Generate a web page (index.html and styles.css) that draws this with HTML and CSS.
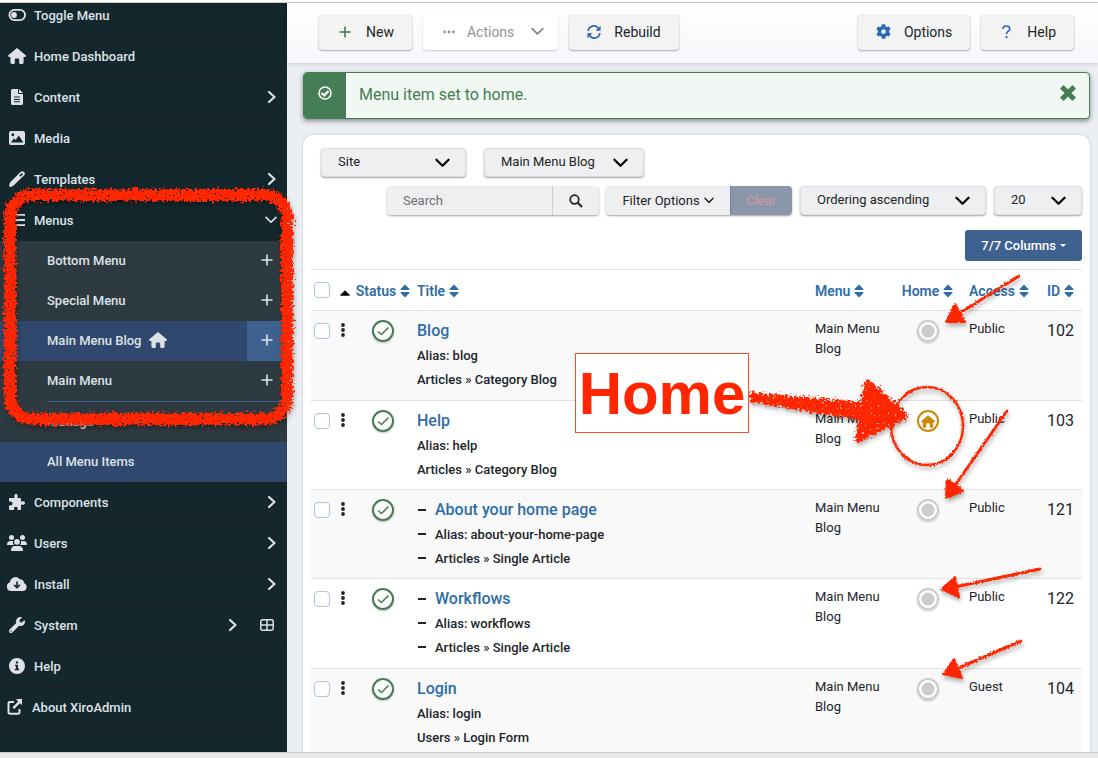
FILE: index.html
```html
<!DOCTYPE html>
<html lang="en">
<head>
<meta charset="utf-8">
<meta name="viewport" content="width=device-width, initial-scale=1">
<title>Menus: Items</title>
<link rel="stylesheet" href="styles.css">
</head>
<body>
<svg class="defs" aria-hidden="true">
  <symbol id="i-home" viewBox="0 0 18 16"><path d="M9 0 18 7.4Q18 9 16.8 9H15.6V14.6Q15.6 16 14.2 16H12.4Q11.2 16 11.2 14.8V11.4Q11.2 10.4 10.2 10.4H7.8Q6.8 10.4 6.8 11.4V14.8Q6.8 16 5.6 16H3.8Q2.4 16 2.4 14.6V9H1.2Q0 9 0 7.6Z"/></symbol>
  <symbol id="i-right" viewBox="0 0 10 14"><path d="M2 2 7.5 7 2 12" fill="none" stroke="currentColor" stroke-width="2.2" stroke-linecap="round" stroke-linejoin="round"/></symbol>
  <symbol id="i-down" viewBox="0 0 16 10"><path d="M1.5 1.5 8 8 14.5 1.5" fill="none" stroke="currentColor" stroke-width="2.3" stroke-linecap="round" stroke-linejoin="round"/></symbol>
  <symbol id="i-plus" viewBox="0 0 12 12"><path d="M6 .5V11.5M.5 6H11.5" fill="none" stroke="currentColor" stroke-width="1.6"/></symbol>
  <symbol id="i-sort" viewBox="0 0 10 14"><path d="M5 .5 9.6 5.2Q9.6 6 9 6H1Q.4 6 .4 5.2ZM5 13.5 9.6 8.8Q9.6 8 9 8H1Q.4 8 .4 8.8Z"/></symbol>
  <symbol id="i-dots" viewBox="0 0 4 14"><circle cx="2" cy="2" r="1.9"/><circle cx="2" cy="7" r="1.9"/><circle cx="2" cy="12" r="1.9"/></symbol>
  <symbol id="i-check" viewBox="0 0 14 14"><path d="M2 7.5 5.5 10.5 12.5 3.5" fill="none" stroke="currentColor" stroke-width="1.6"/></symbol>
</svg>

<div class="app">
  <nav class="sidebar">
    <ul class="nav">
      <li><a href="#"><svg class="ico" viewBox="0 0 18 16"><path fill-rule="evenodd" d="M6.5 2H12A6 6 0 0 1 12 14H6.5A6 6 0 0 1 6.5 2ZM6.5 3.8A4.2 4.2 0 0 0 6.5 12.2H12A4.2 4.2 0 0 0 12 3.8Z"/><circle cx="6" cy="8" r="2.9"/></svg><span>Toggle Menu</span></a></li>
      <li><a href="#"><svg class="ico"><use href="#i-home"/></svg><span>Home Dashboard</span></a></li>
      <li><a href="#"><svg class="ico" viewBox="0 0 18 16"><path fill-rule="evenodd" d="M5 0H10V3.5Q10 5 11.5 5H15V14.5Q15 16 13.5 16H4.5Q3 16 3 14.5V1.5Q3 0 4.5 0ZM6 7.6V8.6H12V7.6ZM6 9.9V10.9H12V9.9ZM6 12.2V13.2H12V12.2ZM11 0 15 4H11Z"/></svg><span>Content</span><svg class="caret"><use href="#i-right"/></svg></a></li>
      <li><a href="#"><svg class="ico" viewBox="0 0 18 16"><path fill-rule="evenodd" d="M3 1H15Q17 1 17 3V13Q17 15 15 15H3Q1 15 1 13V3Q1 1 3 1ZM4.8 3.3A1.5 1.5 0 1 0 4.81 3.3ZM3 12.5H15.3L10.8 5.6 7.6 10 6 8.3Z"/></svg><span>Media</span></a></li>
      <li><a href="#"><svg class="ico" viewBox="0 0 18 16"><path fill-rule="evenodd" d="M12.8.8Q14.4-.6 16 1T16.2 4.2L5 15 2.5 15.9Q1 16 1.2 14.5L2 11.5ZM11.3 4.5 12.5 5.7 15 3.2 13.9 2.1Z"/></svg><span>Templates</span><svg class="caret"><use href="#i-right"/></svg></a></li>
      <li><a href="#" aria-expanded="true"><svg class="ico" viewBox="0 0 18 16"><path d="M2 2H17V3.8H2ZM2 7.1H17V8.9H2ZM2 12.2H17V14H2Z"/></svg><span>Menus</span><svg class="caret-down"><use href="#i-down"/></svg></a>
        <ul class="subnav">
          <li><a href="#">Bottom Menu</a><a class="add" href="#" aria-label="Add to Bottom Menu"><svg><use href="#i-plus"/></svg></a></li>
          <li><a href="#">Special Menu</a><a class="add" href="#" aria-label="Add to Special Menu"><svg><use href="#i-plus"/></svg></a></li>
          <li class="current"><a href="#">Main Menu Blog<svg class="ico"><use href="#i-home"/></svg></a><a class="add" href="#" aria-label="Add to Main Menu Blog"><svg><use href="#i-plus"/></svg></a></li>
          <li><a href="#">Main Menu</a><a class="add" href="#" aria-label="Add to Main Menu"><svg><use href="#i-plus"/></svg></a></li>
          <li class="rule"></li>
          <li><a href="#">Manage</a></li>
          <li class="current"><a href="#">All Menu Items</a></li>
        </ul>
      </li>
      <li><a href="#"><svg class="ico" viewBox="0 0 18 16"><path d="M1 5Q1 4 2 4H6Q6.8 4 6.5 3.2 5.8 0 8 0T9.5 3.2Q9.2 4 10 4H12Q13 4 13 5V7Q13 7.8 13.8 7.5 17 6.6 17 9T13.8 10.5Q13 10.2 13 11V15Q13 16 12 16H10Q9.1 16 9.5 15.2 10.2 12.7 7.8 12.7T6.2 15.2Q6.5 16 5.6 16H2Q1 16 1 15V12Q1 11.2 1.8 11.4 4.6 12 4.6 9.5T1.8 7.5Q1 7.8 1 7Z"/></svg><span>Components</span><svg class="caret"><use href="#i-right"/></svg></a></li>
      <li><a href="#"><svg class="ico wide" viewBox="0 0 20 16"><circle cx="4.5" cy="2.5" r="2.5"/><circle cx="15.5" cy="2.5" r="2.5"/><circle cx="10" cy="6.8" r="2.9"/><path d="M0 10Q0 6 3.5 6H6Q5.3 8.5 7 10ZM20 10Q20 6 16.5 6H14Q14.7 8.5 13 10ZM4 16Q4 11 8 11H12Q16 11 16 16Z"/></svg><span>Users</span><svg class="caret"><use href="#i-right"/></svg></a></li>
      <li><a href="#"><svg class="ico wide" viewBox="0 0 20 16"><path fill-rule="evenodd" d="M4.5 15A4.5 4.5 0 0 1 3 6.2 5.4 5.4 0 0 1 12.7 3.3 3.6 3.6 0 0 1 17 7.1 4.1 4.1 0 0 1 16 15ZM9.2 5.5V9.8L7.6 8.3 6.6 9.4 10 12.8 13.4 9.4 12.4 8.3 10.8 9.8V5.5Z"/></svg><span>Install</span><svg class="caret"><use href="#i-right"/></svg></a></li>
      <li><a href="#"><svg class="ico" viewBox="0 0 512 512"><path d="M507.73 109.1c-2.24-9.03-13.54-12.09-20.12-5.51l-74.36 74.36-67.88-11.31-11.31-67.88 74.36-74.36c6.62-6.62 3.43-17.9-5.66-20.16-47.38-11.74-99.55.91-136.58 37.93-39.64 39.64-50.55 97.1-34.05 147.2L18.74 402.76c-24.99 24.99-24.99 65.51 0 90.5 24.99 24.99 65.51 24.99 90.5 0l213.21-213.21c50.12 16.71 107.47 5.68 147.37-34.22 37.07-37.07 49.7-89.32 37.91-136.73zM64 472c-13.25 0-24-10.75-24-24 0-13.26 10.75-24 24-24s24 10.74 24 24c0 13.25-10.75 24-24 24z"/></svg><span>System</span><svg class="caret spaced"><use href="#i-right"/></svg><svg class="grid-ico" viewBox="0 0 14 12"><path d="M2.5.8H11.5Q13.2.8 13.2 2.5V9.5Q13.2 11.2 11.5 11.2H2.5Q.8 11.2.8 9.5V2.5Q.8.8 2.5.8ZM7 1V11M1 6H13" fill="none" stroke="currentColor" stroke-width="1.5"/></svg></a></li>
      <li><a href="#"><svg class="ico" viewBox="0 0 18 16"><path fill-rule="evenodd" d="M9 0A8 8 0 1 1 8.99 0ZM7.9 3.5V5.6H10V3.5ZM7 6.8V8.2H8V10.8H6.8V12.2H11.2V10.8H10V6.8Z"/></svg><span>Help</span></a></li>
      <li><a href="#" class="compact"><svg class="ico" viewBox="0 0 18 16"><path d="M8 3H4Q2.5 3 2.5 4.5V13Q2.5 14.8 4.3 14.8H12Q13.5 14.8 13.5 13V10" fill="none" stroke="currentColor" stroke-width="2"/><path d="M10 0H16V6L14 4.2 8.2 10 6.5 8.2 12.2 2.5Z"/></svg><span>About XiroAdmin</span></a></li>
    </ul>
  </nav>

  <main class="main">
    <header class="toolbar">
      <button type="button" class="btn new"><svg class="plus green"><use href="#i-plus"/></svg>New</button>
      <button type="button" class="btn disabled" disabled><svg class="more" viewBox="0 0 12 4"><circle cx="1.6" cy="2" r="1.4"/><circle cx="6" cy="2" r="1.4"/><circle cx="10.4" cy="2" r="1.4"/></svg>Actions<svg class="down"><use href="#i-down"/></svg></button>
      <button type="button" class="btn"><svg class="sync" viewBox="0 0 14 14"><path d="M1.2 6A5.5 5.5 0 0 1 11.5 3.8M12.8 8A5.5 5.5 0 0 1 2.5 10.2" fill="none" stroke="currentColor" stroke-width="1.7"/><path d="M13.6.8V5.8H8.6ZM.4 13.2V8.2H5.4Z"/></svg>Rebuild</button>
      <button type="button" class="btn push"><svg class="cog" viewBox="0 0 512 512"><path d="M487.4 315.7l-42.6-24.6c4.3-23.2 4.3-47 0-70.2l42.6-24.6c4.9-2.8 7.1-8.6 5.5-14-11.1-35.6-30-67.8-54.7-94.6-3.8-4.1-10-5.1-14.8-2.3L380.8 110c-17.9-15.4-38.5-27.3-60.8-35.1V25.8c0-5.6-3.9-10.5-9.4-11.7-36.7-8.2-74.3-7.8-109.2 0-5.5 1.2-9.4 6.1-9.4 11.7V75c-22.2 7.9-42.8 19.8-60.8 35.1L88.7 85.5c-4.9-2.8-11-1.9-14.8 2.3-24.7 26.7-43.6 58.9-54.7 94.6-1.7 5.4.6 11.2 5.5 14L67.3 221c-4.3 23.2-4.3 47 0 70.2l-42.6 24.6c-4.9 2.8-7.1 8.6-5.5 14 11.1 35.6 30 67.8 54.7 94.6 3.8 4.1 10 5.1 14.8 2.3l42.6-24.6c17.9 15.4 38.5 27.3 60.8 35.1v49.2c0 5.6 3.9 10.5 9.4 11.7 36.7 8.2 74.3 7.8 109.2 0 5.5-1.2 9.4-6.1 9.4-11.7v-49.2c22.2-7.9 42.8-19.8 60.8-35.1l42.6 24.6c4.9 2.8 11 1.9 14.8-2.3 24.7-26.7 43.6-58.9 54.7-94.6 1.5-5.5-.7-11.3-5.6-14.1zM256 336c-44.1 0-80-35.9-80-80s35.9-80 80-80 80 35.9 80 80-35.9 80-80 80z"/></svg>Options</button>
      <button type="button" class="btn"><svg class="question" viewBox="0 0 10 14"><path d="M1.3 3.8Q1.6 1 4.8 1T8.3 3.7Q8.3 5.2 6.7 6.2T5 9.2" fill="none" stroke="currentColor" stroke-width="1.6"/><circle cx="5" cy="12.2" r="1.1"/></svg>Help</button>
    </header>

    <div class="alert" role="alert">
      <span class="alert-icon"><svg viewBox="0 0 14 14"><circle cx="7" cy="7" r="6" fill="none" stroke="currentColor" stroke-width="1.5"/><path d="M3.6 7 6.2 9.5 10.4 5" fill="none" stroke="currentColor" stroke-width="2.2"/></svg></span>
      <p>Menu item set to home.</p>
      <button type="button" class="close" aria-label="Close"><svg viewBox="0 0 16 16"><path d="M2.5 2.5 13.5 13.5M13.5 2.5 2.5 13.5" stroke="currentColor" stroke-width="4.5"/></svg></button>
    </div>

    <section class="card">
      <div class="filters top">
        <div class="select w-site"><select aria-label="Client"><option>Site</option></select><svg><use href="#i-down"/></svg></div>
        <div class="select w-menu"><select aria-label="Menu"><option>Main Menu Blog</option></select><svg><use href="#i-down"/></svg></div>
      </div>
      <div class="filters tools">
        <div class="search"><input type="text" placeholder="Search" aria-label="Search"><button type="button" aria-label="Search"><svg viewBox="0 0 14 14"><circle cx="5.5" cy="5.5" r="4.3" fill="none" stroke="currentColor" stroke-width="1.7"/><path d="M8.8 8.8 13 13" stroke="currentColor" stroke-width="2"/></svg></button></div>
        <div class="group"><button type="button" class="opts">Filter Options<svg><use href="#i-down"/></svg></button><button type="button" class="clear" disabled>Clear</button></div>
        <div class="select w-order"><select aria-label="Sort by"><option>Ordering ascending</option></select><svg><use href="#i-down"/></svg></div>
        <div class="select w-limit"><select aria-label="Items per page"><option>20</option></select><svg><use href="#i-down"/></svg></div>
      </div>
      <div class="columns"><button type="button">7/7 Columns<span class="tri"></span></button></div>

      <table class="items">
        <colgroup><col class="c-check"><col class="c-order"><col class="c-status"><col><col class="c-menu"><col class="c-home"><col class="c-access"><col class="c-id"></colgroup>
        <thead><tr>
          <th><input type="checkbox" aria-label="Check all"></th>
          <th><a href="#" aria-label="Ordering"><svg class="up" viewBox="0 0 10 6"><path d="M5 .3 9.8 5Q9.8 5.8 9 5.8H1Q.2 5.8.2 5Z"/></svg></a></th>
          <th class="mid"><a href="#">Status <svg class="sort"><use href="#i-sort"/></svg></a></th>
          <th class="title"><a href="#">Title <svg class="sort"><use href="#i-sort"/></svg></a></th>
          <th class="title"><a href="#">Menu <svg class="sort"><use href="#i-sort"/></svg></a></th>
          <th class="mid"><a href="#">Home <svg class="sort"><use href="#i-sort"/></svg></a></th>
          <th class="access"><a href="#">Access <svg class="sort"><use href="#i-sort"/></svg></a></th>
          <th><a href="#">ID <svg class="sort"><use href="#i-sort"/></svg></a></th>
        </tr></thead>
        <tbody>
          <tr>
            <td><input type="checkbox" aria-label="Select Blog"></td><td><svg class="drag"><use href="#i-dots"/></svg></td>
            <td class="mid"><button type="button" class="round" aria-label="Published"><svg><use href="#i-check"/></svg></button></td>
            <td class="title"><div class="item"><a href="#">Blog</a><p>Alias: blog</p><p>Articles » Category Blog</p></div></td>
            <td class="small title">Main Menu Blog</td><td class="mid"><button type="button" class="round off" aria-label="Set home"></button></td><td class="small access">Public</td><td class="id">102</td>
          </tr>
          <tr>
            <td><input type="checkbox" aria-label="Select Help"></td><td><svg class="drag"><use href="#i-dots"/></svg></td>
            <td class="mid"><button type="button" class="round" aria-label="Published"><svg><use href="#i-check"/></svg></button></td>
            <td class="title"><div class="item"><a href="#">Help</a><p>Alias: help</p><p>Articles » Category Blog</p></div></td>
            <td class="small title">Main Menu Blog</td><td class="mid"><button type="button" class="round default" aria-label="Home"><svg><use href="#i-home"/></svg></button></td><td class="small access">Public</td><td class="id">103</td>
          </tr>
          <tr>
            <td><input type="checkbox" aria-label="Select About your home page"></td><td><svg class="drag"><use href="#i-dots"/></svg></td>
            <td class="mid"><button type="button" class="round" aria-label="Published"><svg><use href="#i-check"/></svg></button></td>
            <td class="title"><div class="item child"><a href="#">About your home page</a><p>Alias: about-your-home-page</p><p>Articles » Single Article</p></div></td>
            <td class="small title">Main Menu Blog</td><td class="mid"><button type="button" class="round off" aria-label="Set home"></button></td><td class="small access">Public</td><td class="id">121</td>
          </tr>
          <tr>
            <td><input type="checkbox" aria-label="Select Workflows"></td><td><svg class="drag"><use href="#i-dots"/></svg></td>
            <td class="mid"><button type="button" class="round" aria-label="Published"><svg><use href="#i-check"/></svg></button></td>
            <td class="title"><div class="item child"><a href="#">Workflows</a><p>Alias: workflows</p><p>Articles » Single Article</p></div></td>
            <td class="small title">Main Menu Blog</td><td class="mid"><button type="button" class="round off" aria-label="Set home"></button></td><td class="small access">Public</td><td class="id">122</td>
          </tr>
          <tr>
            <td><input type="checkbox" aria-label="Select Login"></td><td><svg class="drag"><use href="#i-dots"/></svg></td>
            <td class="mid"><button type="button" class="round" aria-label="Published"><svg><use href="#i-check"/></svg></button></td>
            <td class="title"><div class="item"><a href="#">Login</a><p>Alias: login</p><p>Users » Login Form</p></div></td>
            <td class="small title">Main Menu Blog</td><td class="mid"><button type="button" class="round off" aria-label="Set home"></button></td><td class="small access">Guest</td><td class="id">104</td>
          </tr>
        </tbody>
      </table>
    </section>
  </main>
</div>
<footer class="statusbar"></footer>

<svg class="notes" width="1098" height="758" viewBox="0 0 1098 758" aria-hidden="true">
  <defs>
    <filter id="chalk" filterUnits="userSpaceOnUse" x="0" y="0" width="1098" height="758" color-interpolation-filters="sRGB">
      <feTurbulence type="fractalNoise" baseFrequency="0.4" numOctaves="2" seed="4" result="n"/>
      <feDisplacementMap in="SourceGraphic" in2="n" scale="10" xChannelSelector="R" yChannelSelector="G" result="d"/>
      <feColorMatrix in="n" type="matrix" values="0 0 0 0 0  0 0 0 0 0  0 0 0 0 0  0 0 14 0 -3.2" result="grain"/>
      <feComposite in="d" in2="grain" operator="in"/>
    </filter>
    <filter id="pencil" filterUnits="userSpaceOnUse" x="0" y="0" width="1098" height="758" color-interpolation-filters="sRGB">
      <feTurbulence type="fractalNoise" baseFrequency="0.5" numOctaves="2" seed="7" result="n"/>
      <feDisplacementMap in="SourceGraphic" in2="n" scale="3" xChannelSelector="R" yChannelSelector="G"/>
    </filter>
  </defs>
  <g class="shadow">
    <g filter="url(#chalk)">
      <rect x="10" y="195" width="277" height="224" rx="22" fill="none" stroke="#ff2600" stroke-width="12"/>
      <path d="M750 392 862 402 860 420 750 402Z"/>
      <path d="M868 384 904 416 859 438Z" stroke="#ff2600" stroke-width="8" stroke-linejoin="round"/>
    </g>
    <g filter="url(#pencil)" stroke="#ff2600">
      <ellipse cx="927" cy="426" rx="36" ry="39" fill="none" stroke-width="2.5"/>
      <path d="M1019 276 958 314M1007 411 956 484M1040 569 955 587M1021 641 956 669" stroke-width="3" fill="none" stroke-linecap="round"/>
      <path d="M955 304 946 322 965 322ZM947 479 963 491 946 498ZM955 577 942 589 959 597ZM954 659 943 674 962 678Z" stroke-width="2" stroke-linejoin="round"/>
    </g>
  </g>
</svg>
<div class="callout">Home</div>
</body>
</html>
```
FILE: styles.css
```css
* { box-sizing: border-box; }
body {
  margin: 0; height: 100vh; display: flex; flex-direction: column; overflow: hidden;
  background: #fff; color: #212529;
  font-family: Roboto, "Liberation Sans", sans-serif; font-size: 14px;
}
a { color: inherit; text-decoration: none; }
ul, p { margin: 0; padding: 0; list-style: none; }
svg { fill: currentColor; flex: none; display: block; }
button, input, select { font: inherit; color: inherit; margin: 0; }
.defs { position: absolute; width: 0; height: 0; }

.app { flex: 1; min-height: 0; display: flex; margin-top: 2px; border-top: 1px solid #ccc; }
.statusbar { height: 6px; background: #e8e8e8; border-top: 1px solid #c8c8c8; }

.sidebar { width: 287px; flex: none; background: #14272d; color: #dee2e8; overflow: hidden; font-size: 13px; font-weight: 500; }
.nav { margin-top: -7px; }
.nav > li { border-bottom: 1px solid #1b1b24; }
.nav > li > a { display: flex; align-items: center; height: 40px; padding: 0 8px 2px; gap: 8px; }
.nav > li > a > span { flex: 1; }
.nav > li > .compact { padding-left: 6px; }
.ico { width: 18px; height: 16px; }
.ico.wide { width: 20px; margin: 0 -1px; }
.caret { width: 10px; height: 14px; margin-right: 2px; }
.caret.spaced { margin-right: 14px; }
.caret-down { width: 12px; height: 8px; margin-right: 2px; }
.grid-ico { width: 14px; height: 12px; margin-right: 5px; }
.subnav { background: #2e3a41; }
.subnav li { display: flex; align-items: center; height: 40px; }
.subnav a { flex: 1; display: flex; align-items: center; gap: 8px; height: 40px; padding: 0 0 2px 47px; }
.subnav .add { flex: none; width: 40px; padding: 0 0 2px; justify-content: center; }
.subnav .add svg { width: 12px; height: 12px; }
.subnav .current { background: #30486d; }
.subnav .current .add { background: #3f618f; }
.subnav .rule { height: 1px; margin-left: 47px; background: #3f618f; }

.main { flex: 1; min-width: 0; display: flex; flex-direction: column; background: #ebeef3; }
.toolbar { height: 60px; flex: none; display: flex; gap: 11px; padding: 12px 24px 0 32px; background: linear-gradient(#fff, #f6f7fb); box-shadow: 0 1px 4px #00000026; }
.btn {
  display: flex; align-items: center; height: 35px; padding: 0 18px 2px; gap: 13px;
  border: 0; border-radius: 4px; background: #f3f3f3; font-size: 14px;
  box-shadow: 0 1px 2px #00000050, 0 0 1px #00000030;
}
.btn svg { color: #2a69b8; }
.btn.new { padding-left: 20px; gap: 15px; }
.btn .plus { width: 12px; height: 12px; }
.btn .green { color: #457d54; }
.btn .more { width: 12px; height: 4px; color: #8593a5; }
.btn .down { width: 13px; height: 9px; margin-left: 5px; color: #888; }
.btn .sync { width: 14px; height: 14px; }
.btn .question { width: 15px; height: 14px; }
.btn .cog { width: 15px; height: 15px; }
.btn.disabled { background: #fff; color: #909396; gap: 12px; padding-left: 20px; padding-right: 14px; box-shadow: 0 1px 2px #00000030; }
.push { margin-left: auto; }

.alert {
  display: flex; align-items: center; height: 47px; flex: none; margin: 9px 8px 0 16px;
  border: 1px solid #457d54; border-radius: 4px; background: #f1f7f3; color: #457d54;
  font-size: 16px; overflow: hidden; box-shadow: 0 2px 5px #00000070;
}
.alert-icon { width: 42px; align-self: stretch; display: grid; justify-items: center; padding-top: 13px; background: #457d54; color: #fff; }
.alert-icon svg { width: 14px; height: 14px; }
.alert p { flex: 1; padding: 0 0 2px 13px; }
.close { border: 0; padding: 0; background: none; margin: 0 12px 6px 0; }
.close svg { width: 18px; height: 18px; }

.card { flex: 1; min-height: 0; overflow: hidden; margin: 16px 8px 0 16px; padding: 13px 8px 0; border-radius: 10px 10px 0 0; background: #fff; box-shadow: 0 0 2px #00000040; }
.filters { display: flex; }
.top { gap: 18px; padding-left: 10px; }
.tools { justify-content: flex-end; gap: 8px; margin-top: 9px; }
.select { display: grid; align-items: center; height: 29px; }
.select select { grid-area: 1 / 1; width: 100%; height: 29px; appearance: none; border: 1px solid #dbdee4; border-radius: 4px; background: #eeeff1; padding: 0 16px 2px; font-size: 13px; box-shadow: 0 1px 2px #00000060; }
.select svg { grid-area: 1 / 1; justify-self: end; width: 15px; height: 10px; margin-right: 16px; color: #000; pointer-events: none; }
.w-site { width: 145px; }
.w-menu { width: 160px; }
.w-order { width: 186px; }
.w-limit { width: 88px; }
.search, .group { display: flex; height: 29px; border-radius: 4px; box-shadow: 0 1px 2px #00000060; font-size: 13px; }
.search { margin-right: -1px; }
.search input { width: 166px; border: 0; border-right: 1px solid #ccced2; border-radius: 4px 0 0 4px; background: #eeeff1; padding: 0 16px; }
.search input::placeholder { color: #6b7075; }
.search button { width: 46px; border: 0; border-radius: 0 4px 4px 0; background: #eeeff1; padding: 0; display: grid; place-items: center; }
.search svg { width: 14px; height: 14px; }
.opts { width: 124px; display: flex; align-items: center; justify-content: center; gap: 4px; border: 0; border-radius: 4px 0 0 4px; background: #eeeff1; padding: 0; }
.opts svg { width: 10px; height: 7px; }
.clear { width: 62px; border: 0; border-left: 1px solid #75849a; border-radius: 0 4px 4px 0; background: #8a97ab; color: #d69b9b; padding: 0; }
.columns { display: flex; justify-content: flex-end; margin: 15px 0 8px; }
.columns button { display: flex; align-items: center; gap: 4px; height: 31px; padding: 0 16px; border: 0; border-radius: 3px; background: #3f618f; color: #fff; font-size: 13px; font-weight: 500; }
.tri { border: 3px solid transparent; border-top-color: #fff; border-bottom: 0; }

.items { width: 100%; table-layout: fixed; border-collapse: separate; border-spacing: 0; }
.c-check { width: 26px; } .c-order { width: 16px; } .c-status { width: 60px; }
.c-menu { width: 83px; } .c-home { width: 67px; } .c-access { width: 83px; } .c-id { width: 38px; }
.items th, .items td { border-top: 1px solid #dfe1e4; padding: 0 3px; text-align: left; vertical-align: top; }
.items th { height: 41px; padding-top: 12px; color: #2e6da7; font-size: 14px; font-weight: 600; line-height: 18px; white-space: nowrap; }
.items th a { display: inline-flex; gap: 4px; align-items: center; }
.items th.mid { padding-left: 0; padding-right: 0; }
.items .title { padding-left: 4px; }
.sort { width: 10px; height: 14px; }
.up { width: 10px; height: 6px; color: #000; }
.items td { height: 89px; padding-top: 9px; }
.items tbody tr:nth-child(3n + 1) td { height: 90px; }
.items tbody tr:nth-child(odd) td { background: #f9f9f9; }
.items .mid { text-align: center; }
.items .access { padding-left: 8px; }
.items input { appearance: none; display: block; width: 16px; height: 16px; border: 1px solid #aec3dd; border-radius: 4px; background: #fff; }
.items td input { margin-top: 3px; }
.drag { width: 4px; height: 14px; margin: 3px 0 0 1px; }
.round { display: inline-grid; place-items: center; width: 22px; height: 22px; padding: 0; border: 2px solid #457d54; border-radius: 50%; background: #fff; color: #457d54; box-shadow: 0 1px 2px #00000040; }
.round svg { width: 14px; height: 14px; }
.round.off { border-color: #ccc; background: radial-gradient(circle, #ccc 6px, #fff 7px); }
.round.default { border-color: #c98a0b; color: #c98a0b; box-shadow: none; }
.round.default svg { width: 14px; height: 13px; }
.item { font-size: 13px; font-weight: 500; line-height: 24px; }
.item a { display: block; width: fit-content; color: #2e6da7; font-size: 16px; line-height: 22px; margin-bottom: 2px; }
.item.child { padding-left: 18px; background: linear-gradient(#212529, #212529) 1px 10px / 8px 2px no-repeat, linear-gradient(#212529, #212529) 1px 34px / 8px 2px no-repeat, linear-gradient(#212529, #212529) 1px 58px / 8px 2px no-repeat; }
.items .small { font-size: 13px; line-height: 20px; padding-top: 8px; }
.items .id { font-size: 16px; line-height: 22px; }

.notes { position: absolute; left: 0; top: 0; pointer-events: none; fill: #ff2600; }
.shadow { filter: drop-shadow(1px 3px 2px #00000050); }
.callout { position: absolute; left: 575px; top: 353px; width: 174px; height: 80px; border: 1px solid #ff4a2a; background: #fff; color: #ff2600; font: bold 60px/79px "Liberation Sans", sans-serif; text-align: center; }
```
